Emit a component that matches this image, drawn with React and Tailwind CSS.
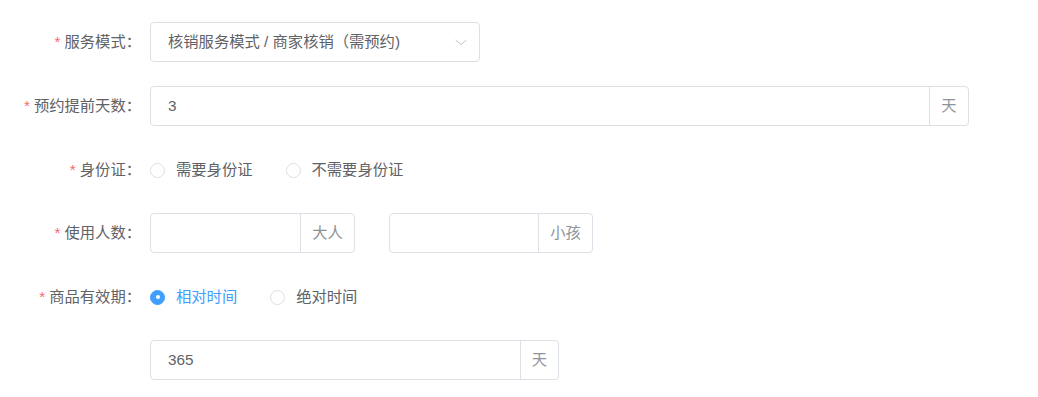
import React from "react";

const font = { fontFamily: '"Liberation Sans", "Noto Sans CJK SC", sans-serif' };

function Label({ children }) {
  return (
    <div className="w-[150px] shrink-0 pr-[9px] text-right text-[15.3px] text-[#606266] leading-10 whitespace-nowrap">
      <span className="text-[#F56C6C] mr-1">*</span>
      {children}：
    </div>
  );
}

function Radio({ checked, label }) {
  return (
    <label className="flex items-center mr-[33px] cursor-pointer">
      <span
        className={
          "w-[15px] h-[15px] rounded-full border flex items-center justify-center " +
          (checked ? "bg-[#409EFF] border-[#409EFF]" : "bg-white border-[#DCDFE6]")
        }
      >
        {checked && <span className="w-1 h-1 rounded-full bg-white" />}
      </span>
      <span className={"pl-[11px] text-[15.3px] " + (checked ? "text-[#409EFF]" : "text-[#606266]")}>{label}</span>
    </label>
  );
}

function InputAppend({ width, value, append, appendW }) {
  return (
    <div className={"flex h-10 border border-[#DCDFE6] rounded " + width}>
      <div className="flex-1 flex items-center px-[17px] text-[15.3px] text-[#606266]">{value}</div>
      <div className={"flex items-center justify-center border-l border-[#DCDFE6] text-[15.3px] text-[#909399] " + appendW}>
        {append}
      </div>
    </div>
  );
}

export default function App() {
  return (
    <div className="w-[1038px] h-[397px] bg-white pt-[22px]" style={font}>
      <div className="flex mb-6">
        <Label>服务模式</Label>
        <div className="w-[330px] h-10 border border-[#DCDFE6] rounded flex items-center pl-[17px] pr-[11px] text-[15.3px] text-[#606266]">
          <span className="flex-1 whitespace-nowrap">核销服务模式 / 商家核销（需预约)</span>
          <svg width="14" height="14" viewBox="0 0 14 14" fill="none">
            <path d="M1.5 5 L7 9.5 L12.5 5" stroke="#C0C4CC" strokeWidth="1" />
          </svg>
        </div>
      </div>
      <div className="flex mb-6">
        <Label>预约提前天数</Label>
        <InputAppend width="w-[819px]" value="3" append="天" appendW="w-[39px]" />
      </div>
      <div className="flex mb-[23px]">
        <Label>身份证</Label>
        <div className="flex items-center h-10">
          <Radio label="需要身份证" />
          <Radio label="不需要身份证" />
        </div>
      </div>
      <div className="flex mb-6">
        <Label>使用人数</Label>
        <div className="flex gap-[34px]">
          <InputAppend width="w-[205px]" value="" append="大人" appendW="w-[54px]" />
          <InputAppend width="w-[204px]" value="" append="小孩" appendW="w-[54px]" />
        </div>
      </div>
      <div className="flex mb-[23px]">
        <Label>商品有效期</Label>
        <div className="flex items-center h-10">
          <Radio checked label="相对时间" />
          <Radio label="绝对时间" />
        </div>
      </div>
      <div className="flex">
        <div className="w-[150px] shrink-0" />
        <InputAppend width="w-[409px]" value="365" append="天" appendW="w-[38px]" />
      </div>
    </div>
  );
}
